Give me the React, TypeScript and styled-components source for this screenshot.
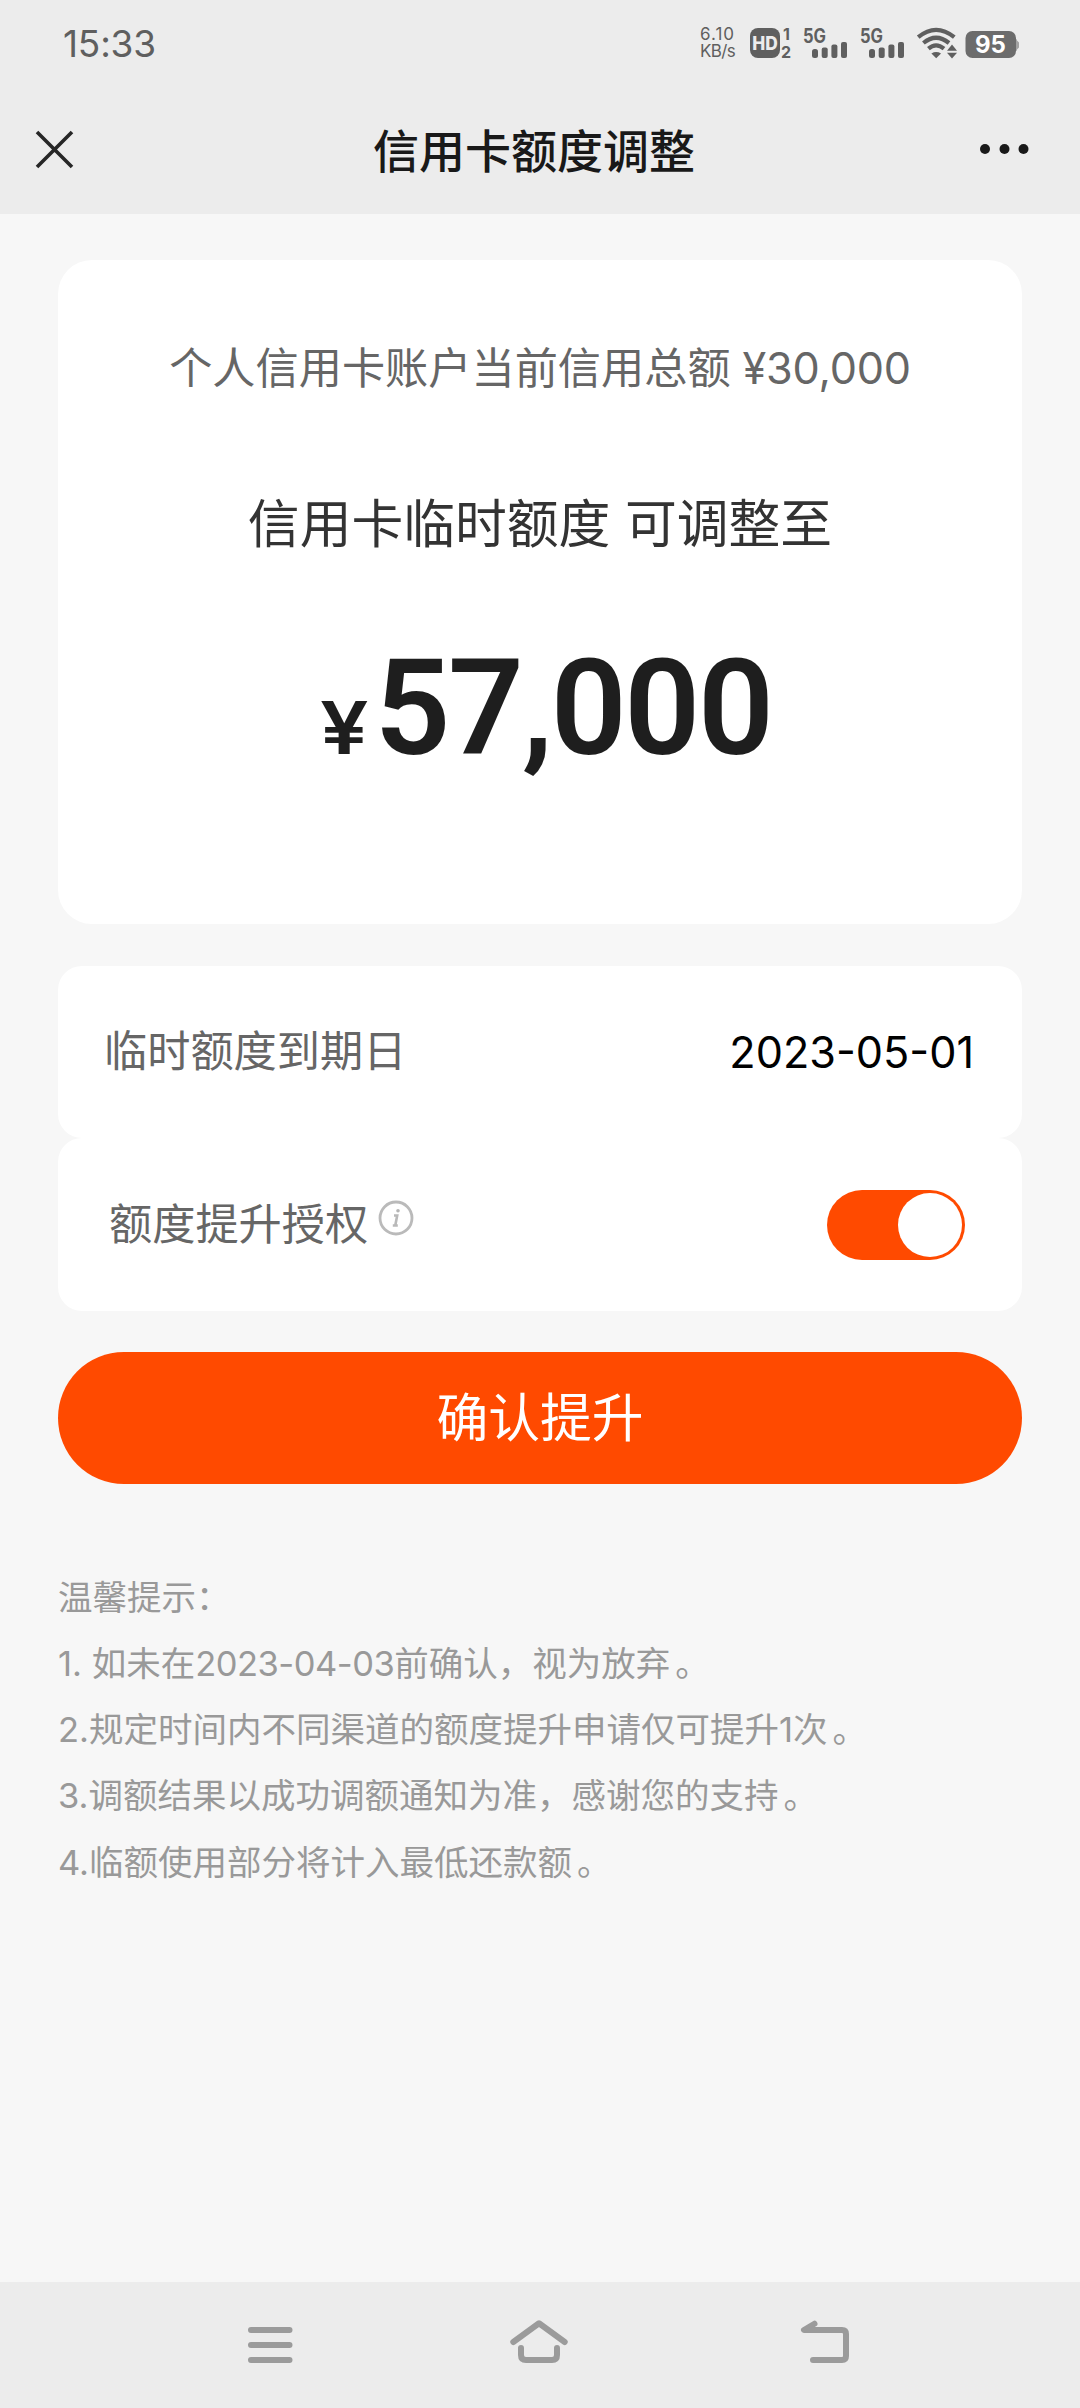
import React, { useState } from "react";
import styled, { createGlobalStyle } from "styled-components";

const GlobalStyle = createGlobalStyle`
  * { box-sizing: border-box; }
  body {
    margin: 0;
    background: #f7f7f7;
    font-family: Inter, "Noto Sans CJK SC", sans-serif;
  }
  button { border: 0; padding: 0; background: none; font: inherit; }
  svg { display: block; overflow: visible; }
`;

const Screen = styled.div`
  width: 1080px;
  height: 2408px;
  display: flex;
  flex-direction: column;
  background: #f7f7f7;
  overflow: hidden;
  white-space: nowrap;
`;

const StatusBar = styled.header`
  height: 88px;
  flex: none;
  display: flex;
  align-items: center;
  justify-content: space-between;
  padding: 0 60px 0 63px;
  background: #ececec;
  color: #5f5f5f;
`;

const Clock = styled.span`
  font-size: 37px;
  line-height: 44px;
  letter-spacing: -0.2px;
`;

const StatusIcons = styled.div`
  display: flex;
  align-items: center;
  height: 34px;
  padding-bottom: 3px;
`;

const NetSpeed = styled.div`
  width: 50px;
  display: flex;
  flex-direction: column;
  font-size: 17px;
  line-height: 17px;
`;

const Speed = styled.span<{ $spacing: number }>`
  letter-spacing: ${(p) => p.$spacing}px;
`;

const NavBar = styled.nav`
  height: 126px;
  flex: none;
  display: grid;
  grid-template-columns: 120px 1fr 120px;
  align-items: center;
  background: #ececec;
`;

const NavButton = styled.button<{ $end?: boolean }>`
  display: flex;
  justify-content: ${(p) => (p.$end ? "flex-end" : "flex-start")};
  padding: ${(p) => (p.$end ? "0 49px 4px 0" : "0 0 4px 34px")};
`;

const Title = styled.h1`
  margin: 0;
  padding-right: 12px;
  text-align: center;
  font-size: 46px;
  line-height: 60px;
  font-weight: 500;
  color: #191919;
`;

const Main = styled.main`
  flex: 1;
  padding: 46px 58px 0;
  display: flex;
  flex-direction: column;
`;

const LimitCard = styled.section`
  height: 664px;
  border-radius: 34px;
  background: #fff;
  display: flex;
  flex-direction: column;
  align-items: center;
  padding-top: 78px;
`;

const CurrentLimit = styled.p`
  margin: 0;
  font-size: 43.2px;
  line-height: 60px;
  color: #666;
`;

const Latin = styled.span<{ $spacing?: number }>`
  letter-spacing: ${(p) => p.$spacing ?? 0}px;
`;

const TempLimit = styled.h2`
  margin: 90px 0 0;
  font-size: 51.8px;
  line-height: 72px;
  font-weight: 400;
  color: #333;
`;

const Amount = styled.div`
  margin-top: 74px;
  padding-left: 12px;
  display: flex;
  align-items: baseline;
  color: #1e1e1e;
  line-height: 150px;
`;

const Currency = styled.span`
  font-size: 73px;
  font-weight: 600;
  margin-right: 13px;
  transform: scaleX(1.18);
  transform-origin: left;
`;

const Figure = styled.span`
  font-family: Roboto, sans-serif;
  font-weight: 600;
  font-size: 133px;
  letter-spacing: -2.3px;
`;

const Rows = styled.section`
  margin-top: 42px;
`;

const Row = styled.div<{ $inset?: boolean }>`
  height: 172.4px;
  border-radius: 24px;
  background: #fff;
  display: flex;
  align-items: center;
  justify-content: space-between;
  padding: ${(p) => (p.$inset ? "0 57px 0 51px" : "0 48px 0 46px")};
`;

const RowLabel = styled.div`
  display: flex;
  align-items: center;
  gap: 10px;
  padding-bottom: 2px;
  font-size: 43.2px;
  line-height: 60px;
  color: #666;
`;

const InfoButton = styled.button`
  display: flex;
  padding-bottom: 11px;
`;

const RowValue = styled.span`
  font-size: 43.2px;
  line-height: 60px;
  color: #000;
`;

const Toggle = styled.button<{ $on: boolean }>`
  width: 138px;
  height: 70px;
  border-radius: 35px;
  padding: 3px;
  display: flex;
  justify-content: ${(p) => (p.$on ? "flex-end" : "flex-start")};
  align-items: center;
  background: ${(p) => (p.$on ? "#ff4a00" : "#ccc")};
`;

const Knob = styled.span`
  width: 64px;
  height: 64px;
  border-radius: 50%;
  background: #fff;
`;

const Confirm = styled.button`
  margin-top: 41px;
  height: 132px;
  flex: none;
  border-radius: 66px;
  background: #ff4a00;
  color: #fff;
  font-size: 51.8px;
  line-height: 72px;
`;

const Tips = styled.section`
  margin-top: 81px;
  font-size: 34.5px;
  line-height: 66.2px;
  color: #999;
`;

const Tip = styled.p`
  margin: 0;
`;

const Stop = styled.span`
  padding-left: 5px;
`;

const SystemNav = styled.footer`
  height: 126px;
  flex: none;
  display: flex;
  justify-content: space-between;
  align-items: center;
  padding: 0 225px 6px 240px;
  background: #ececec;
`;

const Signal = () => (
  <svg width="57" height="32" viewBox="0 0 57 32">
    <text x="0" y="15.5" textLength="23" lengthAdjust="spacingAndGlyphs" fontFamily="Inter, sans-serif" fontWeight="700" fontSize="19.5" fill="#5f5f5f">5G</text>
    <g fill="#5f5f5f">
      <rect x="9" y="22" width="6" height="9" rx="2.5" />
      <rect x="18.7" y="20.5" width="6" height="10.5" rx="2" />
      <rect x="28.4" y="17.5" width="6" height="13.5" rx="2" />
      <rect x="38" y="15" width="6" height="16" rx="2" />
    </g>
  </svg>
);

const HdBadge = () => (
  <svg width="53" height="32" viewBox="0 0 53 32">
    <rect x="0" y="1" width="30" height="30" rx="8" fill="#5f5f5f" />
    <text x="2.3" y="22.5" textLength="25.500" lengthAdjust="spacingAndGlyphs" fontFamily="Inter, sans-serif" fontWeight="800" fontSize="18.500" fill="#ececec">HD</text>
    <g fontFamily="Inter, sans-serif" fontWeight="700" fontSize="16" fill="#5f5f5f">
      <text x="33" y="12.500">1</text>
      <text x="31" y="30.500">2</text>
    </g>
  </svg>
);

const Wifi = () => (
  <svg width="48" height="32" viewBox="0 0 48 32">
    <g fill="none" stroke="#5f5f5f" strokeWidth="4.2">
      <path d="M1.2 10.2 Q19 -4.5 37.3 10.2" />
      <path d="M6.4 16 Q19 5.5 32 16" />
      <path d="M11.4 21.7 Q19 15.2 27 21.7" />
    </g>
    <g fill="#5f5f5f">
      <path d="M14.4 26.5 Q19.2 23.6 24 26.5 L19.2 31.2 Z" />
      <path d="M35 17.5 L40 23.7 H30 Z" />
      <path d="M30 25.7 H40 L35 31.6 Z" />
    </g>
  </svg>
);

const Battery = () => (
  <svg width="55" height="32" viewBox="0 0 55 32">
    <path d="M49 12 h2 q1 0 1 1.5 l2 2 v5 l-2 2 q0 1.500 -1 1.500 h-2z" fill="#a2a2a2" />
    <rect x="0.500" y="4" width="50.500" height="27" rx="7" fill="#6c6c6c" />
    <text x="10" y="26" textLength="31" lengthAdjust="spacingAndGlyphs" fontFamily="Inter, sans-serif" fontWeight="700" fontSize="24" fill="#fff">95</text>
  </svg>
);

const CloseIcon = () => (
  <svg width="40" height="40" viewBox="0 0 40 40" stroke="#262626" strokeWidth="3.600">
    <path d="M3 3 L38 38 M38 3 L3 38" />
  </svg>
);

const MoreIcon = () => (
  <svg width="52" height="12" viewBox="0 0 52 12" fill="#191919">
    <circle cx="6" cy="6" r="5" />
    <circle cx="25.500" cy="6" r="5" />
    <circle cx="44.500" cy="6" r="5" />
  </svg>
);

const InfoIcon = () => (
  <svg width="36" height="36" viewBox="0 0 36 36">
    <circle cx="18" cy="18" r="16" fill="none" stroke="#bababa" strokeWidth="2.800" />
    <circle cx="20" cy="10.800" r="1.800" fill="#b5b5b5" />
    <path d="M16 15.500 h3.200 l-1.900 9.800 M14.800 25.500 h5" fill="none" stroke="#b9b9b9" strokeWidth="2.600" />
  </svg>
);

const navStroke = {
  fill: "none",
  stroke: "#9b9b9b",
  strokeWidth: 6,
  strokeLinecap: "round" as const,
  strokeLinejoin: "round" as const,
};

const MenuIcon = () => (
  <svg width="60" height="52" viewBox="240 2316 60 52" {...navStroke}>
    <path d="M251 2330 H289.500 M251 2345 H289.500 M251 2360 H289.500" />
  </svg>
);

const HomeIcon = () => (
  <svg width="64" height="52" viewBox="517 2316 64 52" {...navStroke}>
    <path d="M514.300 2342 L540 2323.300 L565.700 2342" />
    <path d="M522 2348 V2355 Q522 2360 527 2360 H553 Q558 2360 558 2355 V2348" />
  </svg>
);

const BackIcon = () => (
  <svg width="60" height="52" viewBox="795 2316 60 52" {...navStroke}>
    <path d="M814.500 2323.700 L804 2330 H842 Q846 2330 846 2334 V2356 Q846 2360 842 2360 H813" />
  </svg>
);

export default function App() {
  const [authorized, setAuthorized] = useState(true);
  return (
    <Screen>
      <GlobalStyle />
      <StatusBar>
        <Clock>15:33</Clock>
        <StatusIcons>
          <NetSpeed>
            <Speed $spacing={1}>6.10</Speed>
            <Speed $spacing={-0.6}>KB/s</Speed>
          </NetSpeed>
          <HdBadge />
          <Signal />
          <Signal />
          <Wifi />
          <Battery />
        </StatusIcons>
      </StatusBar>
      <NavBar>
        <NavButton><CloseIcon /></NavButton>
        <Title>信用卡额度调整</Title>
        <NavButton $end><MoreIcon /></NavButton>
      </NavBar>
      <Main>
        <LimitCard>
          <CurrentLimit>个人信用卡账户当前信用总额<Latin $spacing={-0.2}> ¥30,000</Latin></CurrentLimit>
          <TempLimit>信用卡临时额度 可调整至</TempLimit>
          <Amount>
            <Currency>¥</Currency>
            <Figure>57,000</Figure>
          </Amount>
        </LimitCard>
        <Rows>
          <Row>
            <RowLabel>临时额度到期日</RowLabel>
            <RowValue>2023-05-01</RowValue>
          </Row>
          <Row $inset>
            <RowLabel>
              额度提升授权
              <InfoButton><InfoIcon /></InfoButton>
            </RowLabel>
            <Toggle $on={authorized} onClick={() => setAuthorized(!authorized)}><Knob /></Toggle>
          </Row>
        </Rows>
        <Confirm>确认提升</Confirm>
        <Tips>
          <Tip>温馨提示：</Tip>
          <Tip>1. 如未在<Latin $spacing={-0.5}>2023-04-03</Latin>前确认，视为放弃<Stop>。</Stop></Tip>
          <Tip>2.规定时间内不同渠道的额度提升申请仅可提升1次<Stop>。</Stop></Tip>
          <Tip>3.调额结果以成功调额通知为准，感谢您的支持<Stop>。</Stop></Tip>
          <Tip>4.临额使用部分将计入最低还款额<Stop>。</Stop></Tip>
        </Tips>
      </Main>
      <SystemNav>
        <MenuIcon />
        <HomeIcon />
        <BackIcon />
      </SystemNav>
    </Screen>
  );
}
